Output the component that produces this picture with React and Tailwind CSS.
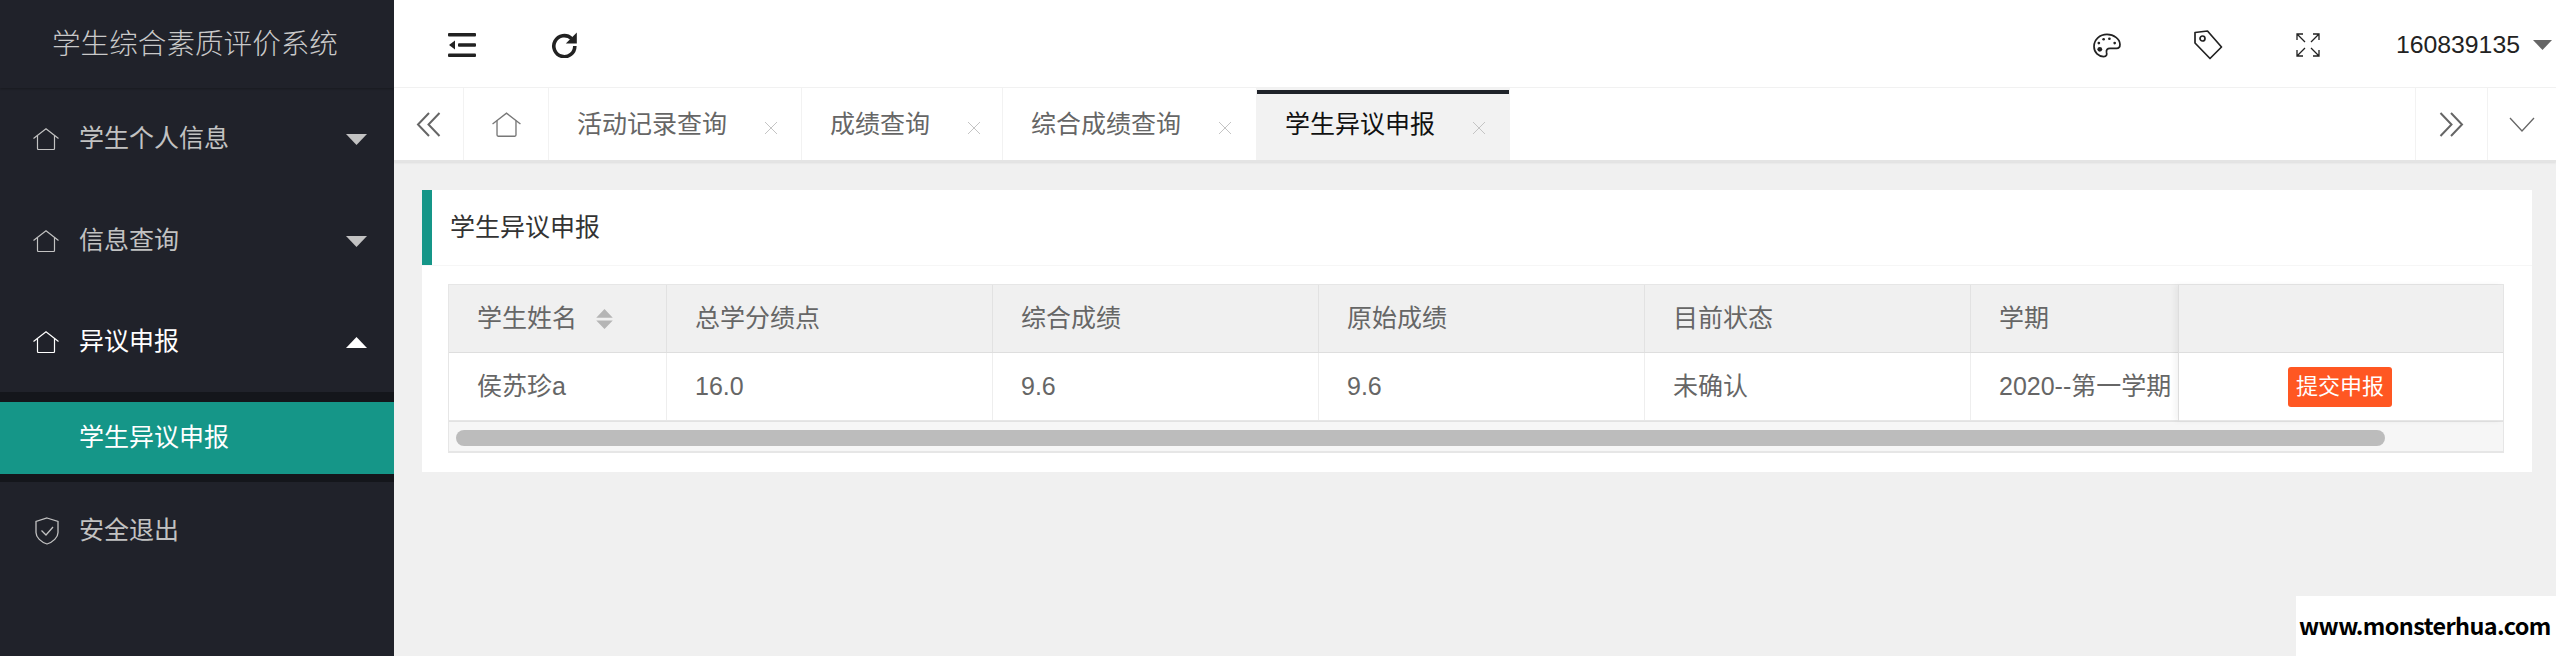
const CJK = "font-['Liberation_Sans','Noto_Sans_CJK_SC',sans-serif]";

const COLUMNS = [
  { title: "学生姓名", value: "侯苏珍a", width: "w-[218px]", sort: true },
  { title: "总学分绩点", value: "16.0", width: "w-[326px]" },
  { title: "综合成绩", value: "9.6", width: "w-[326px]" },
  { title: "原始成绩", value: "9.6", width: "w-[326px]" },
  { title: "目前状态", value: "未确认", width: "w-[326px]" },
  { title: "学期", value: "2020--第一学期", width: "w-[326px]" },
];

const TABS = [
  { label: "活动记录查询", width: "w-[253px]" },
  { label: "成绩查询", width: "w-[201px]" },
  { label: "综合成绩查询", width: "w-[254px]" },
  { label: "学生异议申报", width: "w-[253px]", active: true },
];

function HomeIcon({ className }) {
  return (
    <svg viewBox="0 0 26 22" className={className} fill="none" stroke="currentColor" strokeWidth="1.2">
      <path d="M0.500 10.500 13 0.800 25.500 10.500" />
      <path d="M4.500 7.500V20.500a1 1 0 0 0 1 1h15a1 1 0 0 0 1-1V7.500" />
    </svg>
  );
}

function Caret({ up, className }) {
  return (
    <svg viewBox="0 0 21 11" className={className} fill="currentColor">
      <path d={up ? "M10.500 0 21 11H0z" : "M0 0h21L10.500 11z"} />
    </svg>
  );
}

function MenuItem({ label, up, active, height }) {
  return (
    <div className={`${height} flex items-center pl-[33px] pr-[27px] ${active ? "text-white" : "text-[#c2c2c2]"}`}>
      <HomeIcon className="w-[26px] h-[22px] shrink-0" />
      <span className="ml-[20px] flex-1 text-[25px]">{label}</span>
      <Caret up={up} className="w-[21px] h-[11px]" />
    </div>
  );
}

function Sidebar() {
  return (
    <aside className="w-[394px] shrink-0 bg-[#20222a]">
      <div className="h-[88px] flex items-center pl-[52px] text-[28.6px] font-light text-[#c9c9c9] shadow-[0_1px_2px_rgba(0,0,0,0.25)]">
        学生综合素质评价系统
      </div>
      <MenuItem label="学生个人信息" height="h-[102px]" />
      <MenuItem label="信息查询" height="h-[102px]" />
      <MenuItem label="异议申报" height="h-[100px]" up active />
      <div className="bg-[#14161b] pt-[10px] pb-[8px]">
        <div className="h-[72px] flex items-center pl-[79px] bg-[#159688] text-[25px] text-white">学生异议申报</div>
      </div>
      <div className="h-[98px] flex items-center pl-[35px] text-[#c2c2c2]">
        <svg viewBox="0 0 24 28" className="w-[24px] h-[28px]" fill="none" stroke="currentColor" strokeWidth="1.3">
          <path d="M12 1 23 4.500v11c0 5-5 9.500-11 11.500C6 25 1 20.500 1 15.500V4.500z" />
          <path d="m6.500 13.500 4.500 4.500 7-8" />
        </svg>
        <span className="ml-[20px] text-[25px]">安全退出</span>
      </div>
    </aside>
  );
}

function TopBar() {
  return (
    <header className="h-[88px] pt-[3px] flex items-center bg-white border-b border-[#f2f2f2] text-[#222]">
      <svg viewBox="0 0 28 24" className="ml-[54px] w-[28px] h-[24px]" fill="currentColor">
        <rect x="0" y="0" width="28" height="3.400" rx="1" />
        <rect x="0" y="20.600" width="28" height="3.400" rx="1" />
        <rect x="10" y="10.300" width="18" height="3.400" rx="1" />
        <path d="M7 7.500v9L1 12z" />
      </svg>
      <svg viewBox="0 0 26 26" className="ml-[75px] w-[26px] h-[26px]" fill="none" stroke="currentColor" strokeWidth="3.600">
        <path d="M20.500 6.500A10.500 10.500 0 1 0 23.800 14" />
        <path d="M25.800 0.500v11h-11z" fill="currentColor" stroke="none" />
      </svg>
      <div className="flex-1" />
      <svg viewBox="0 0 30 26" className="w-[30px] h-[25px]" fill="none" stroke="currentColor" strokeWidth="1.800">
        <path d="M15 1.500C7.500 1.500 1.500 7 1.500 14c0 6.500 5 10.500 10 10.500 3.500 0 3.500-2.500 3-4.500-.5-2.500 1-4 3.500-4H25c2.500 0 3.500-1.500 3.500-4C28.500 6 22 1.500 15 1.500z" />
        <circle cx="7.500" cy="17" r="2.500" fill="currentColor" stroke="none" />
        <circle cx="6.500" cy="10.500" r="1.400" fill="currentColor" stroke="none" />
        <circle cx="11.500" cy="6.500" r="1.400" fill="currentColor" stroke="none" />
        <circle cx="17.500" cy="6" r="1.400" fill="currentColor" stroke="none" />
        <circle cx="23" cy="10.500" r="1.400" fill="currentColor" stroke="none" />
      </svg>
      <svg viewBox="0 0 30 30" className="ml-[71px] w-[30px] h-[30px]" fill="none" stroke="currentColor" strokeWidth="1.700" strokeLinejoin="round">
        <path d="M2 2.500 14.500 1 28.500 17 17 28.500 2 13z" />
        <circle cx="9.500" cy="8.500" r="2.500" />
      </svg>
      <svg viewBox="0 0 24 24" className="ml-[73px] w-[24px] h-[24px]" fill="none" stroke="currentColor" strokeWidth="1.300">
        <path d="M9 9 1.500 1.500M1 7V1h6" />
        <path d="M15 9l7.500-7.500M23 7V1h-6" />
        <path d="M9 15l-7.500 7.500M1 17v6h6" />
        <path d="M15 15l7.500 7.500M23 17v6h-6" />
      </svg>
      <span className="ml-[76px] text-[24.8px]">160839135</span>
      <Caret className="ml-[13px] mr-[4px] w-[19px] h-[10px] text-[#666]" />
    </header>
  );
}

function TabBar() {
  return (
    <div className="h-[74px] flex bg-white border-b-2 border-[#e4e4e4] text-[#666] shadow-[0_1px_2px_rgba(0,0,0,0.08)]">
      <div className="w-[70px] flex items-center justify-center border-r border-[#f2f2f2]">
        <svg viewBox="0 0 25 25" className="w-[25px] h-[25px] mr-[1px]" fill="none" stroke="currentColor" strokeWidth="2">
          <path d="M13 1 2 12.500 13 24M23.500 1 12.500 12.500 23.500 24" />
        </svg>
      </div>
      <div className="w-[85px] flex items-center justify-center border-r border-[#f2f2f2] text-[#777]">
        <HomeIcon className="w-[29px] h-[25px]" />
      </div>
      {TABS.map((tab) => (
        <div
          key={tab.label}
          className={`${tab.width} relative flex items-center pl-[28px] border-r border-[#f2f2f2] ${
            tab.active ? "bg-[#f2f2f2] text-[#111]" : ""
          }`}
        >
          {tab.active && <div className="absolute left-0 right-0 top-[2px] h-[4px] bg-[#1f2329]" />}
          <span className="text-[25px] mt-[1px]">{tab.label}</span>
          <svg viewBox="0 0 14 14" className="ml-[37px] mt-[8px] w-[14px] h-[14px] text-[#c4c4c4]" fill="none" stroke="currentColor" strokeWidth="1">
            <path d="M1 1l12 12M13 1 1 13" />
          </svg>
        </div>
      ))}
      <div className="flex-1" />
      <div className="w-[72px] flex items-center justify-center border-l border-[#f2f2f2]">
        <svg viewBox="0 0 25 25" className="w-[25px] h-[25px]" fill="none" stroke="currentColor" strokeWidth="2">
          <path d="M12 1 23 12.500 12 24M1.500 1 12.500 12.500 1.500 24" />
        </svg>
      </div>
      <div className="w-[69px] flex items-center justify-center border-l border-[#f2f2f2]">
        <svg viewBox="0 0 26 15" className="w-[26px] h-[15px]" fill="none" stroke="currentColor" strokeWidth="1.300">
          <path d="M1 1 13 14 25 1" />
        </svg>
      </div>
    </div>
  );
}

function DataTable() {
  return (
    <div className="border border-[#e6e6e6] border-b-2 text-[#666] text-[25px] relative">
      <div className="flex">
        <div className="w-[1729px] overflow-hidden shrink-0">
          <div className="flex w-[1849px] h-[68px] bg-[#f0f0f0] border-b border-[#dedede]">
            {COLUMNS.map((col) => (
              <div key={col.title} className={`${col.width} shrink-0 flex items-center pl-[28px] border-r border-[#e2e2e2]`}>
                <span>{col.title}</span>
                {col.sort && (
                  <svg viewBox="0 0 20 24" className="ml-[18px] w-[19px] h-[22px] text-[#b5b5b5]" fill="currentColor">
                    <path d="M10 1l9 9.500H1zM1 13.500h18L10 23z" />
                  </svg>
                )}
              </div>
            ))}
          </div>
          <div className="flex w-[1849px] h-[68px] bg-white border-b border-[#e6e6e6]">
            {COLUMNS.map((col) => (
              <div key={col.title} className={`${col.width} shrink-0 flex items-center pl-[28px] border-r border-[#eeeeee] whitespace-nowrap`}>
                {col.value}
              </div>
            ))}
          </div>
        </div>
        <div className="flex-1 border-l border-[#dedede] shadow-[-3px_0_6px_rgba(0,0,0,0.05)] z-10">
          <div className="h-[68px] bg-[#f0f0f0] border-b border-[#dedede]" />
          <div className="h-[68px] bg-white border-b border-[#e6e6e6] flex items-center pl-[109px]">
            <button className="w-[104px] h-[40px] rounded-[3px] bg-[#ff5722] text-white text-[22px] leading-none">提交申报</button>
          </div>
        </div>
      </div>
      <div className="h-[30px] bg-[#f6f6f6] border-t border-[#e2e2e2] pl-[7px] pt-[8px]">
        <div className="w-[1929px] h-[16px] rounded-full bg-[#bcbcbc]" />
      </div>
    </div>
  );
}

export default function App() {
  return (
    <div className={`relative h-[656px] flex overflow-hidden bg-[#f0f0f0] ${CJK}`}>
      <Sidebar />
      <main className="flex-1 min-w-0">
        <TopBar />
        <TabBar />
        <section className="mt-[28px] ml-[28px] mr-[24px] bg-white">
          <div className="h-[75px] flex items-center pl-[18px] border-l-[10px] border-[#159688] text-[25px] text-[#333] shadow-[0_1px_0_#f6f6f6]">
            学生异议申报
          </div>
          <div className="pt-[19px] pl-[26px] pr-[28px] pb-[19px]">
            <DataTable />
          </div>
        </section>
      </main>
      <div className="absolute right-0 bottom-0 w-[260px] h-[60px] bg-white flex items-center pl-[3px] text-[23.4px] tracking-[-0.6px] font-['Noto_Sans_CJK_SC',sans-serif] font-bold text-black whitespace-nowrap">
        www.monsterhua.com
      </div>
    </div>
  );
}
